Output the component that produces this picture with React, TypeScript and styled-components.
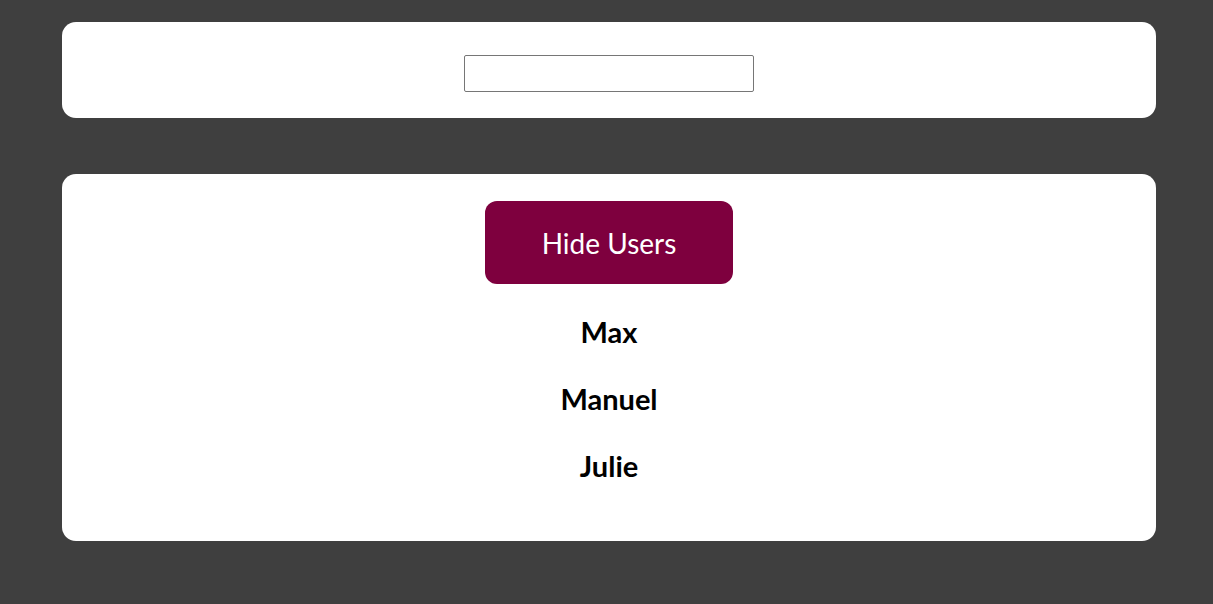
import { useState } from "react";
import styled, { createGlobalStyle } from "styled-components";

const GlobalStyle = createGlobalStyle`
  * {
    box-sizing: border-box;
  }
  body {
    margin: 0;
    background: #3f3f3f;
    font-family: Lato, "Noto Sans", sans-serif;
  }
`;

const DUMMY_USERS = [
  { id: "u1", name: "Max" },
  { id: "u2", name: "Manuel" },
  { id: "u3", name: "Julie" },
];

const App = () => {
  const [showUsers, setShowUsers] = useState(true);
  const [filter, setFilter] = useState("");

  const users = DUMMY_USERS.filter((u) =>
    u.name.toLowerCase().includes(filter.toLowerCase())
  );

  return (
    <Page>
      <GlobalStyle />
      <Card $padding="33px 0 26px">
        <SearchInput
          type="search"
          value={filter}
          onChange={(e) => setFilter(e.target.value)}
        />
      </Card>
      <Card $padding="27px 0 42px">
        <ToggleButton onClick={() => setShowUsers((s) => !s)}>
          {showUsers ? "Hide" : "Show"} Users
        </ToggleButton>
        {showUsers && (
          <UserList>
            {users.map((user) => (
              <UserItem key={user.id}>{user.name}</UserItem>
            ))}
          </UserList>
        )}
      </Card>
    </Page>
  );
};

const Page = styled.div`
  display: flex;
  flex-direction: column;
  gap: 56px;
  padding: 22px 57px 0 62px;
`;

const Card = styled.section<{ $padding: string }>`
  display: flex;
  flex-direction: column;
  align-items: center;
  background: #ffffff;
  border-radius: 14px;
  padding: ${(p) => p.$padding};
`;

const SearchInput = styled.input`
  width: 290px;
  height: 37px;
  border: 1px solid #767676;
  border-radius: 2px;
  padding: 0 4px;
  font: inherit;
  appearance: none;
  outline: none;
`;

const ToggleButton = styled.button`
  width: 248px;
  height: 83px;
  border: none;
  border-radius: 12px;
  background: #7e003e;
  color: #ffffff;
  font-family: inherit;
  font-size: 28px;
  cursor: pointer;
`;

const UserList = styled.ul`
  list-style: none;
  margin: 14px 0 0;
  padding: 0;
  display: flex;
  flex-direction: column;
  align-items: center;
`;

const UserItem = styled.li`
  height: 67px;
  line-height: 67px;
  font-size: 29px;
  font-weight: 700;
  color: #000000;
`;

export default App;
